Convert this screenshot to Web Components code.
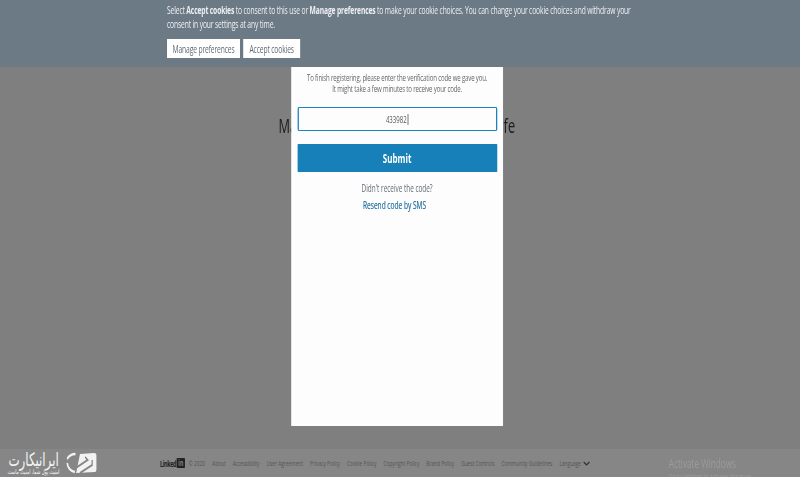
<!DOCTYPE html>
<html lang="en">
<head>
<meta charset="utf-8">
<title>LinkedIn</title>
<style>
  html, body { margin: 0; height: 100%; }
  body { font-family: "Open Sans", "Liberation Sans", sans-serif; background: #7f7f7f; overflow: hidden; }
  join-page { width: 800px; height: 477px; }
</style>
</head>
<body>
<join-page>
  <cookie-banner slot="top">
    Select <b>Accept cookies</b> to consent to this use or <b>Manage preferences</b> to make your cookie choices. You can change your cookie choices and withdraw your<br>consent in your settings at any time.
  </cookie-banner>
  <verify-modal slot="modal" code="433982"></verify-modal>
  <page-footer slot="bottom"></page-footer>
</join-page>

<script>
customElements.define('join-page', class extends HTMLElement {
    constructor() {
        super();
        const shadowRoot = this.attachShadow({ mode: 'open' });
        shadowRoot.innerHTML = `
            <style>
                :host { display: block; overflow: hidden; }
                /* the screenshot is a wide page squeezed to 800px, so it is laid out at 1250px and squeezed the same way */
                .stage {
                    width: 1250px;
                    height: 477px;
                    display: flex;
                    flex-direction: column;
                    position: relative;
                    transform: scaleX(.64);
                    transform-origin: left top;
                    filter: blur(.3px);
                }
                main { flex: 1; display: flex; justify-content: center; padding: 45px 10px 0 0; }
                h1 {
                    margin: 0;
                    font-size: 20px;
                    line-height: 28px;
                    letter-spacing: .15px;
                    font-weight: 400;
                    color: #1b1b1b;
                    white-space: nowrap;
                    height: 28px;
                }
                /* modal sits over the heading */
                .over { position: absolute; left: 455px; top: 67px; }
            </style>
            <div class="stage">
                <slot name="top"></slot>
                <main><h1>Make the most of your professional life</h1></main>
                <div class="over"><slot name="modal"></slot></div>
                <slot name="bottom"></slot>
            </div>
        `;
    }
});

customElements.define('cookie-banner', class extends HTMLElement {
    constructor() {
        super();
        const shadowRoot = this.attachShadow({ mode: 'open' });
        shadowRoot.innerHTML = `
            <style>
                :host {
                    display: block;
                    height: 67px;
                    box-sizing: border-box;
                    padding: 3px 261px 0;
                    background: #6c7a86;
                    color: #eef0f2;
                    font-size: 10.5px;
                    letter-spacing: -.22px;
                }
                p { margin: 0; line-height: 14px; white-space: nowrap; }
                .btns { display: flex; gap: 5px; margin-top: 8px; }
                button {
                    font: inherit;
                    letter-spacing: -.2px;
                    height: 19px;
                    width: 114px;
                    padding: 0;
                    background: #fff;
                    color: #5d6a75;
                    border: 0;
                    white-space: nowrap;
                }
                button + button { width: 89px; }
            </style>
            <p><slot></slot></p>
            <div class="btns">
                <button>Manage preferences</button>
                <button>Accept cookies</button>
            </div>
        `;
    }
});

customElements.define('verify-modal', class extends HTMLElement {
    constructor() {
        super();
        const shadowRoot = this.attachShadow({ mode: 'open' });
        const code = this.getAttribute('code') || '';
        shadowRoot.innerHTML = `
            <style>
                :host {
                    display: flex;
                    flex-direction: column;
                    width: 331px;
                    height: 359px;
                    box-sizing: border-box;
                    padding: 5px 9.5px 0;
                    background: #fdfdfd;
                    color: #666;
                    text-align: center;
                    font-size: 9.5px;
                }
                p { margin: 0; line-height: 11px; white-space: nowrap; }
                .intro { letter-spacing: -.25px; }
                .input {
                    margin-top: 13px;
                    height: 24px;
                    box-sizing: border-box;
                    border: 1px solid #1b84bd;
                    border-left-width: 2px;
                    border-right-width: 2px;
                    border-radius: 2px;
                    display: flex;
                    align-items: center;
                    justify-content: center;
                    color: #555;
                }
                .caret { width: 1.5px; height: 11px; background: #333; margin-left: 1px; }
                .submit {
                    margin-top: 13px;
                    height: 28px;
                    background: #1780b9;
                    color: #fff;
                    font-weight: 700;
                    font-size: 12.5px;
                    display: flex;
                    align-items: center;
                    justify-content: center;
                    border-radius: 1px;
                }
                .hint { margin-top: 10px; font-size: 10px; line-height: 12px; color: #5f6a72; }
                .resend { margin: 5px 8px 0 0; font-size: 10.3px; line-height: 12px; color: #1f6f9f; -webkit-text-stroke: .2px #1f6f9f; }
            </style>
            <p class="intro">To finish registering, please enter the verification code we gave you.<br>It might take a few minutes to receive your code.</p>
            <div class="input"><span>${code}</span><span class="caret"></span></div>
            <div class="submit">Submit</div>
            <p class="hint">Didn't receive the code?</p>
            <p class="resend">Resend code by SMS</p>
        `;
    }
});

customElements.define('page-footer', class extends HTMLElement {
    constructor() {
        super();
        const shadowRoot = this.attachShadow({ mode: 'open' });
        const links = ['About', 'Accessibility', 'User Agreement', 'Privacy Policy', 'Cookie Policy', 'Copyright Policy', 'Brand Policy', 'Guest Controls', 'Community Guidelines'];
        shadowRoot.innerHTML = `
            <style>
                :host {
                    display: flex;
                    align-items: center;
                    height: 28px;
                    background: #868686;
                    color: #555;
                    font-size: 7.5px;
                    position: relative;
                    white-space: nowrap;
                }
                .logo { display: flex; align-items: center; gap: 9px; width: 250px; box-sizing: border-box; padding-left: 11px; height: 28px; }
                .logo .fa { color: #f4f4f4; font-family: "DejaVu Sans", sans-serif; width: 83px; text-align: center; }
                .fa b { display: block; font-size: 18.5px; line-height: 17px; font-weight: 400; }
                .fa small { display: block; font-size: 6.6px; line-height: 8px; }
                .bar { display: flex; align-items: center; gap: 11px; }
                .brand { display: flex; align-items: center; gap: 1px; color: #222; font-weight: 700; font-size: 8.5px; letter-spacing: -.6px; margin-right: -5px; }
                .in { width: 13px; height: 10px; background: #222; color: #868686; font-size: 8px; line-height: 10px; text-align: center; border-radius: 1px; letter-spacing: 0; }
                .lang { display: flex; align-items: center; gap: 3px; }
                .win { position: absolute; left: 1045px; top: 7px; color: #9b9b9b; }
                .win b { display: block; font-weight: 400; font-size: 12.8px; line-height: 14px; }
                .win span { display: block; font-size: 8px; line-height: 12px; }
            </style>
            <div class="logo">
                <div class="fa" dir="rtl"><b>ایرانیکارت</b><small>امنیت پول شما، امنیت ماست</small></div>
                <svg width="48" height="22" viewBox="0 0 48 22">
                    <path d="M22 2 44 1Q48 1 48 4V17Q48 20 45 20L16 21Z" fill="#f2f2f2"/>
                    <path d="M2 7C5 3 10 2 15 2M2 11C3 16 7 19 14 20" fill="none" stroke="#f2f2f2" stroke-width="2.5"/>
                    <path d="M13 17 34 8 30 5M22 21 41 13V8" fill="none" stroke="#868686" stroke-width="2"/>
                </svg>
            </div>
            <div class="bar">
                <span class="brand">Linked<span class="in">in</span></span>
                <span>© 2020</span>
                ${links.map(l => `<span>${l}</span>`).join('')}
                <span class="lang">Language <svg width="11" height="5" viewBox="0 0 11 5"><path d="M1 1 5.5 3.8 10 1" fill="none" stroke="#333" stroke-width="1.5"/></svg></span>
            </div>
            <div class="win"><b>Activate Windows</b><span>Go to Settings to activate Windows.</span></div>
        `;
    }
});
</script>
</body>
</html>
